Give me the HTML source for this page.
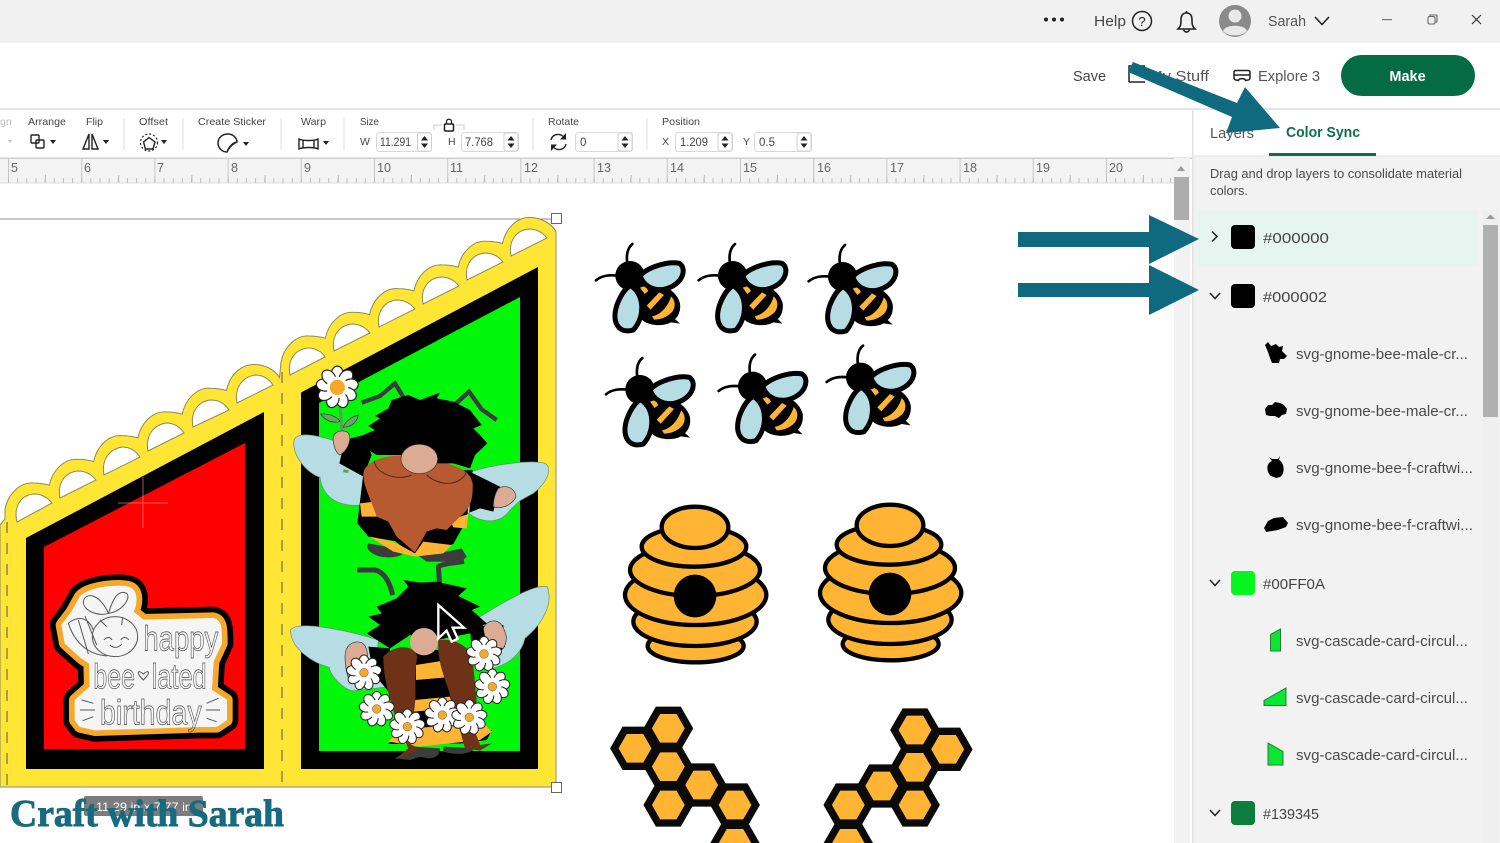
<!DOCTYPE html>
<html><head><meta charset="utf-8"><title>Color Sync</title>
<style>
html,body{margin:0;padding:0;background:#fff;width:1500px;height:843px;overflow:hidden}
svg{display:block}
text{font-family:"Liberation Sans",sans-serif}
.lb{font-size:10.5px;fill:#444}
.v{font-size:11.5px;fill:#444}
.r{font-size:12.5px;fill:#666}
.hx{font-size:15px;fill:#444}
.it{font-size:14.5px;fill:#4a4a4a}
.box{fill:#fff;stroke:#d8d8d8;stroke-width:1}
.ic{fill:none;stroke:#222;stroke-width:1.4}
</style></head><body>
<svg width="1500" height="843" viewBox="0 0 1500 843" xmlns="http://www.w3.org/2000/svg">
<defs>
<g id="bee">
<path d="M112,85C108,58 114,38 127,27" fill="none" stroke="#000" stroke-width="8" stroke-linecap="round"/>
<path d="M18,136C35,122 55,119 85,122" fill="none" stroke="#000" stroke-width="8" stroke-linecap="round"/>
<path d="M140,145C190,135 258,155 270,205C273,225 265,245 255,252L270,266L243,262C220,274 185,274 160,258C130,230 130,180 140,145Z" fill="#000"/>
<circle cx="120" cy="122" r="44" fill="#000"/>
<path d="M150,158L166,153L175,168L164,177Z" fill="#ffb433"/>
<path d="M170,212L208,172L222,180L182,224Z" fill="#ffb433"/>
<path d="M186,244C215,238 235,212 243,184C256,195 258,215 247,230C232,247 210,254 192,254Z" fill="#ffb433"/>
<path d="M150,122C175,95 235,78 268,85C292,100 280,150 222,163C185,168 160,150 150,122Z" fill="#b6dde4" stroke="#000" stroke-width="15" stroke-linejoin="round"/>
<path d="M122,152C165,180 165,245 130,285C85,298 65,262 80,212C90,185 105,160 122,152Z" fill="#b6dde4" stroke="#000" stroke-width="15" stroke-linejoin="round"/>
</g>
<g id="hive" stroke="#000" stroke-width="13" fill="#ffb433">
<ellipse cx="287" cy="468" rx="144" ry="49"/>
<ellipse cx="285" cy="395" rx="185" ry="73"/>
<ellipse cx="287" cy="315" rx="212" ry="90"/>
<ellipse cx="285" cy="240" rx="195" ry="78"/>
<ellipse cx="282" cy="170" rx="157" ry="60"/>
<ellipse cx="285" cy="112" rx="100" ry="62"/>
<circle cx="285" cy="318" r="64" fill="#000" stroke="none"/>
</g>
<polygon id="hex" points="-62,0 -31,-54 31,-54 62,0 31,54 -31,54" fill="#ffb433" stroke="#0a0a0a" stroke-width="22" stroke-linejoin="miter"/>
<g id="daisy">
<g fill="#fff" stroke="#222" stroke-width="3">
<ellipse cx="0" cy="-33" rx="15" ry="20"/>
<ellipse cx="0" cy="-33" rx="15" ry="20" transform="rotate(40)"/>
<ellipse cx="0" cy="-33" rx="15" ry="20" transform="rotate(80)"/>
<ellipse cx="0" cy="-33" rx="15" ry="20" transform="rotate(120)"/>
<ellipse cx="0" cy="-33" rx="15" ry="20" transform="rotate(160)"/>
<ellipse cx="0" cy="-33" rx="15" ry="20" transform="rotate(200)"/>
<ellipse cx="0" cy="-33" rx="15" ry="20" transform="rotate(240)"/>
<ellipse cx="0" cy="-33" rx="15" ry="20" transform="rotate(280)"/>
<ellipse cx="0" cy="-33" rx="15" ry="20" transform="rotate(320)"/>
</g>
<circle r="27" fill="#fff"/>
<circle r="13" fill="#f6a82a" stroke="#555" stroke-width="1.5"/>
</g>
<g id="spin"><rect x="-7" y="-9" width="14" height="18" rx="2" fill="#fff" stroke="#d0d0d0"/><path d="M-3.5,-1.5L0,-6L3.5,-1.5ZM-3.5,1.5L0,6L3.5,1.5Z" fill="#222"/></g>
</defs>

<!-- chrome backgrounds -->
<rect width="1500" height="843" fill="#fff"/>
<rect width="1500" height="43" fill="#f1f1f1"/>
<rect y="108" width="1500" height="2" fill="#e6e6e6"/>

<!-- top bar -->
<circle cx="1046" cy="19.5" r="2" fill="#222"/><circle cx="1054" cy="19.5" r="2" fill="#222"/><circle cx="1062" cy="19.5" r="2" fill="#222"/>
<text x="1094" y="26" font-size="15" fill="#444" textLength="32" lengthAdjust="spacingAndGlyphs">Help</text>
<circle cx="1142" cy="21" r="9.5" fill="none" stroke="#222" stroke-width="1.5"/>
<text x="1142" y="26" font-size="13" fill="#222" text-anchor="middle">?</text>
<path d="M1178,29H1195C1192,26 1192,24 1192,20C1192,15 1190,13 1186.5,13C1183,13 1181,15 1181,20C1181,24 1181,26 1178,29Z" class="ic" style="stroke-width:1.6"/>
<path d="M1183.5,29C1184,33 1189,33 1189.5,29M1186.5,13V11" class="ic" style="stroke-width:1.6"/>
<circle cx="1235" cy="21" r="16" fill="#8a8a8a"/>
<circle cx="1235" cy="16" r="6.5" fill="#e9e9e9"/>
<path d="M1223,31C1225,24 1245,24 1247,31C1242,37 1228,37 1223,31Z" fill="#e9e9e9"/>
<text x="1268" y="26" font-size="14.5" fill="#555" textLength="38" lengthAdjust="spacingAndGlyphs">Sarah</text>
<path d="M1315,17L1322,24.5L1329,17" fill="none" stroke="#222" stroke-width="1.6"/>
<rect x="1382" y="19" width="10" height="1.2" fill="#777"/>
<rect x="1428" y="16.5" width="7" height="7.5" rx="1.5" fill="none" stroke="#666" stroke-width="1.1"/>
<path d="M1430,16V15H1437V22H1435.5" fill="none" stroke="#666" stroke-width="1.1"/>
<path d="M1472,15L1481,24M1481,15L1472,24" stroke="#333" stroke-width="1.2"/>

<!-- header row -->
<text x="1073" y="81" font-size="14.5" fill="#444" textLength="33" lengthAdjust="spacingAndGlyphs">Save</text>
<path d="M1129,82V66H1145M1129,82H1145" fill="none" stroke="#222" stroke-width="1.5"/>
<text x="1149" y="81" font-size="14.5" fill="#555" textLength="60" lengthAdjust="spacingAndGlyphs">My Stuff</text>
<path d="M1234,72C1234,71 1235,70.5 1236,70.5H1248C1249,70.5 1250,71 1250,72V78C1250,79 1249,80 1248,80L1245.5,80.5C1245,78 1239,78 1238.5,80.5L1236,80C1235,80 1234,79 1234,78ZM1234,75H1250" fill="none" stroke="#222" stroke-width="1.5"/>
<text x="1258" y="81" font-size="14.5" fill="#555" textLength="62" lengthAdjust="spacingAndGlyphs">Explore 3</text>
<rect x="1341" y="55" width="134" height="41" rx="20.5" fill="#056b44"/>
<text x="1407.5" y="81" font-size="14.5" font-weight="bold" fill="#fff" text-anchor="middle">Make</text>

<!-- toolbar -->
<g>
<text x="0" y="125" class="lb" style="fill:#bbb">gn</text>
<text x="28" y="125" class="lb" textLength="38" lengthAdjust="spacingAndGlyphs">Arrange</text>
<text x="86" y="125" class="lb" textLength="17" lengthAdjust="spacingAndGlyphs">Flip</text>
<text x="139" y="125" class="lb" textLength="29" lengthAdjust="spacingAndGlyphs">Offset</text>
<text x="198" y="125" class="lb" textLength="68" lengthAdjust="spacingAndGlyphs">Create Sticker</text>
<text x="301" y="125" class="lb" textLength="25" lengthAdjust="spacingAndGlyphs">Warp</text>
<text x="360" y="125" class="lb" textLength="19" lengthAdjust="spacingAndGlyphs">Size</text>
<text x="548" y="125" class="lb" textLength="31" lengthAdjust="spacingAndGlyphs">Rotate</text>
<text x="662" y="125" class="lb" textLength="38" lengthAdjust="spacingAndGlyphs">Position</text>
<path d="M124,118V150M183,118V150M281,118V150M344,118V150M533,118V150M647,118V150" stroke="#dcdcdc" stroke-width="1"/>
<path d="M8,140L12,140L10,143Z" fill="#bbb"/>
<!-- arrange -->
<rect x="31" y="135" width="8" height="8" class="ic" rx="1"/><rect x="36" y="140" width="8" height="8" class="ic" rx="1"/>
<path d="M50,140H56L53,144Z" fill="#222"/>
<!-- flip -->
<path d="M83,149L89,134V149ZM98,149L92,134V149Z" class="ic"/>
<path d="M103,140H109L106,144Z" fill="#222"/>
<!-- offset -->
<path d="M149,137.5L155,142L153,149H145.5L143.5,142Z" class="ic"/>
<circle cx="149" cy="142.5" r="8.5" fill="none" stroke="#222" stroke-width="1.2" stroke-dasharray="2 2"/>
<path d="M161,140H167L164,144Z" fill="#222"/>
<!-- sticker -->
<path d="M227,152C222,152 218,148 218,143C218,138 222,134 228,134C233,134 237,138 237,142C232,143 229,147 227,152ZM227,152C229,148 231,145 237,142" class="ic" style="stroke-width:1.5"/>
<path d="M243,142H249L246,146Z" fill="#222"/>
<!-- warp -->
<path d="M299,139C303,141 314,141 318,139V149C314,147 303,147 299,149ZM303,140V148M314,140V148" class="ic"/>
<path d="M323,141H329L326,145Z" fill="#222"/>
<!-- size -->
<text x="360" y="145" class="lb">W</text>
<rect x="376.5" y="132.5" width="55" height="19" rx="3" class="box"/>
<text x="380" y="146" class="v" textLength="31" lengthAdjust="spacingAndGlyphs">11.291</text>
<use href="#spin" x="424.5" y="142"/>
<text x="448" y="145" class="lb">H</text>
<rect x="461.5" y="132.5" width="57" height="19" rx="3" class="box"/>
<text x="465" y="146" class="v" textLength="28" lengthAdjust="spacingAndGlyphs">7.768</text>
<use href="#spin" x="511" y="142"/>
<path d="M434,130V125H442M456,125H464V130" fill="none" stroke="#ccc"/>
<rect x="444.5" y="124" width="9" height="7" rx="1" fill="none" stroke="#222" stroke-width="1.5"/>
<path d="M446.5,124V121.5C446.5,118.5 451.5,118.5 451.5,121.5V124" fill="none" stroke="#222" stroke-width="1.3"/>
<!-- rotate -->
<path d="M551,140C552,135 557,133.5 561,135C563,136 564,137 565,138.5M566,144C565,149 560,150.5 556,149C554,148 553,147 552,145.5" fill="none" stroke="#222" stroke-width="1.4"/>
<path d="M566,133V139.5H560ZM551,151V144.5H557Z" fill="#222"/>
<rect x="575.5" y="132.5" width="57" height="19" rx="3" class="box"/>
<text x="580" y="146" class="v">0</text>
<use href="#spin" x="625" y="142"/>
<!-- position -->
<text x="662" y="145" class="lb">X</text>
<rect x="675.5" y="132.5" width="57" height="19" rx="3" class="box"/>
<text x="680" y="146" class="v" textLength="28" lengthAdjust="spacingAndGlyphs">1.209</text>
<use href="#spin" x="725" y="142"/>
<text x="743" y="145" class="lb">Y</text>
<rect x="754.5" y="132.5" width="57" height="19" rx="3" class="box"/>
<text x="759" y="146" class="v">0.5</text>
<use href="#spin" x="804" y="142"/>
</g>

<!-- ruler -->
<rect y="158" width="1174" height="25" fill="#f3f3f3"/>
<rect y="157.5" width="1192" height="1.5" fill="#cfcfcf"/>
<path d="M8.5,159V183M81.7,159V183M154.9,159V183M228.1,159V183M301.3,159V183M374.5,159V183M447.7,159V183M520.9,159V183M594.1,159V183M667.3,159V183M740.5,159V183M813.7,159V183M886.9,159V183M960.1,159V183M1033.3,159V183M1106.5,159V183" stroke="#c8c8c8" stroke-width="1"/>
<line x1="45" y1="179" x2="1174" y2="179" stroke="#bbb" stroke-width="8" stroke-dasharray="1 72.2"/>
<line x1="8" y1="180.5" x2="1174" y2="180.5" stroke="#bbb" stroke-width="5" stroke-dasharray="1 8.15"/>
<line x1="0" y1="183" x2="1174" y2="183" stroke="#ddd" stroke-width="1"/>
<g>
<text x="11" y="172" class="r">5</text><text x="84" y="172" class="r">6</text><text x="157" y="172" class="r">7</text><text x="231" y="172" class="r">8</text><text x="304" y="172" class="r">9</text><text x="377" y="172" class="r">10</text><text x="450" y="172" class="r">11</text><text x="524" y="172" class="r">12</text><text x="597" y="172" class="r">13</text><text x="670" y="172" class="r">14</text><text x="743" y="172" class="r">15</text><text x="817" y="172" class="r">16</text><text x="890" y="172" class="r">17</text><text x="963" y="172" class="r">18</text><text x="1036" y="172" class="r">19</text><text x="1109" y="172" class="r">20</text>
</g>

<!-- card -->
<rect x="0" y="218.5" width="556" height="1" fill="#8f8f8f"/>
<path d="M0,525L5,519V509c3,-15 15,-27 28,-26c7,0 12,1 16.3,2.3c3,-15 15,-27 28,-26c7,0 12,1 16.3,2.3c3,-15 15,-27 28,-26c7,0 12,1 16.3,2.3c3,-15 15,-27 28,-26c7,0 12,1 16.3,2.3c3,-15 15,-27 28,-26c7,0 12,1 16.3,2.3c3,-15 14,-26 28,-26c10,0 20,5 25,13L281,362c3,-15 15,-27 28,-26c7,0 12,1 16.3,2.3c3,-15 15,-27 28,-26c7,0 12,1 16.3,2.3c3,-15 15,-27 28,-26c7,0 12,1 16.3,2.3c3,-15 15,-27 28,-26c7,0 12,1 16.3,2.3c3,-15 15,-27 28,-26c7,0 12,1 16.3,2.3c3,-15 15,-27 28,-26c10,0 21,6 25.500,14V787H0Z" fill="#ffe534" stroke="#8c8a5a" stroke-width="1"/>
<g fill="#fff" stroke="#8c8a5a" stroke-width="1">
<path d="M17,522C13,505 22,495 34,494C42,494 48,498 52,503Z"/>
<path d="M60,498C57,482 66,472 78,471C86,471 92,475 96,480Z"/>
<path d="M104,475C101,459 110,449 122,447C130,447 136,451 140,457Z"/>
<path d="M148,451C145,435 154,425 166,423C174,423 180,427 184,433Z"/>
<path d="M193,427C190,411 199,401 211,400C219,400 225,404 229,410Z"/>
<path d="M237,403C234,387 243,377 255,375C263,375 269,379 273,385Z"/>
<path d="M290,375C287,359 296,349 308,348C316,348 322,352 325,357Z"/>
<path d="M334,351C331,335 340,325 352,324C360,324 366,328 370,333Z"/>
<path d="M379,327C376,311 385,301 397,300C405,300 411,304 415,309Z"/>
<path d="M423,304C420,288 429,278 441,277C449,277 455,281 459,286Z"/>
<path d="M467,280C464,264 473,254 485,253C493,253 499,257 503,262Z"/>
<path d="M511,256C508,240 517,230 529,229C537,229 543,233 547,238Z"/>
</g>
<path d="M26,538L264,412V769H26Z" fill="#000"/>
<path d="M44,547L245,443V749H44Z" fill="#ff0000"/>
<path d="M301,392.5L538,267V769H301Z" fill="#000"/>
<path d="M319,403L520,297V751H319Z" fill="#00f70a"/>
<path d="M7,522V787" stroke="#555" stroke-width="1" stroke-dasharray="11 10"/>
<path d="M282,372V787" stroke="#555" stroke-width="1" stroke-dasharray="11 10"/>
<path d="M0,787H556V232" fill="none" stroke="#a0a080" stroke-width="1.2"/>
<rect x="551.5" y="213.5" width="10" height="10" fill="#fff" stroke="#666"/>
<rect x="551.5" y="782.5" width="10" height="10" fill="#fff" stroke="#666"/>
<path d="M143,477V528M118,503H168" stroke="#cc8888" stroke-width="1" opacity=".7"/>

<!-- sticker -->
<g transform="translate(0,530) scale(.33333)">
<g stroke-linejoin="round">
<path d="M240,200C265,170 370,160 395,175C415,190 410,225 400,245L430,270L640,265C665,270 665,295 665,340L640,395L635,480L680,510L680,570L650,590L600,590L285,600L240,590L225,570L225,510L270,470L268,400L245,385L195,340L185,285L215,245Z" fill="#000" stroke="#000" stroke-width="70"/>
<path d="M240,200C265,170 370,160 395,175C415,190 410,225 400,245L430,270L640,265C665,270 665,295 665,340L640,395L635,480L680,510L680,570L650,590L600,590L285,600L240,590L225,570L225,510L270,470L268,400L245,385L195,340L185,285L215,245Z" fill="#f6a82a" stroke="#f6a82a" stroke-width="36"/>
<path d="M240,200C265,170 370,160 395,175C415,190 410,225 400,245L430,270L640,265C665,270 665,295 665,340L640,395L635,480L680,510L680,570L650,590L600,590L285,600L240,590L225,570L225,510L270,470L268,400L245,385L195,340L185,285L215,245Z" fill="#f5f5f5" stroke="#f5f5f5" stroke-width="2"/>
</g>
<g fill="none" stroke="#555" stroke-width="3">
<path d="M325,250C300,190 255,185 250,215C250,245 300,260 325,250C335,220 350,175 380,190C395,205 365,245 325,250Z"/>
<ellipse cx="345" cy="320" rx="68" ry="60"/>
<path d="M280,300C260,250 220,265 205,280C215,310 240,370 320,378"/>
<path d="M235,270L265,372M255,258L290,345"/>
<path d="M312,330C320,320 330,320 336,330M362,330C370,320 380,320 386,330M330,345C340,355 355,355 365,342"/>
<path d="M320,290L300,270M365,285L368,262"/>
<path d="M245,510L280,520M240,540H285M248,572L280,560M620,520L655,505M618,540H660M620,565L650,575"/>
<path d="M430,450C405,425 415,418 430,432C445,418 455,425 430,450Z"/>
</g>
<g fill="none" stroke="#444" stroke-width="2">
<text x="430" y="362" font-size="105" textLength="225" lengthAdjust="spacingAndGlyphs" style="fill:none">happy</text>
<text x="280" y="475" font-size="105" textLength="125" lengthAdjust="spacingAndGlyphs" style="fill:none">bee</text>
<text x="455" y="475" font-size="105" textLength="165" lengthAdjust="spacingAndGlyphs" style="fill:none">lated</text>
<text x="300" y="583" font-size="105" textLength="305" lengthAdjust="spacingAndGlyphs" style="fill:none">birthday</text>
</g>
</g>

<!-- gnome 1 -->
<g transform="translate(280,340) scale(.33333)">
<path d="M42,300C55,270 120,285 250,330L250,495C200,500 130,490 120,412C80,400 35,345 42,300Z" fill="#b6dde4" stroke="#6f8a70" stroke-width="2"/>
<path d="M575,395C650,370 760,360 795,370C820,385 800,430 760,460L720,482L690,510C660,555 600,550 560,515Z" fill="#b6dde4" stroke="#6f8a70" stroke-width="2"/>
<path d="M378,185L345,130L300,168L245,188" fill="none" stroke="#3c3c3c" stroke-width="13"/>
<path d="M520,198L567,155L605,208L650,240" fill="none" stroke="#3c3c3c" stroke-width="13"/>
<path d="M180,190L186,280" stroke="#5f9a5f" stroke-width="9"/>
<path d="M190,392L205,395" stroke="#5f9a5f" stroke-width="9"/>
<path d="M122,222C150,220 175,232 180,245C155,250 135,240 122,222ZM190,262C195,245 215,230 235,225C232,245 215,262 190,262Z" fill="#6fa26f" stroke="#333" stroke-width="2"/>
<g transform="translate(172,142) scale(1.2)">
<use href="#daisy"/>
<circle r="19" fill="#f6a82a"/>
</g>
<!-- feet -->
<path d="M265,610C250,630 290,655 330,652C365,650 375,640 370,630Z" fill="#3c3c3c"/>
<path d="M405,640L500,635L545,625L560,650L540,670L500,665L440,665Z" fill="#3c3c3c"/>
<!-- body -->
<path d="M195,300L250,285L275,345L250,410L178,370Z" fill="#000"/>
<path d="M250,400L232,550L265,590L345,603L405,650L520,612L560,540L578,390Z" fill="#000"/>
<path d="M575,398L660,440L640,515L600,505L568,518Z" fill="#000"/>
<path d="M240,490L285,485L290,530L245,530ZM510,540L565,522L560,565L520,562ZM252,420L270,410L265,435ZM270,590L340,605L405,640L430,605L515,615L490,640L405,650L340,635Z" fill="#ffb433"/>
<!-- beard -->
<path d="M250,400C260,350 350,340 420,350C500,370 570,380 578,430C580,490 565,510 540,530L500,570L470,565L440,575L405,637L350,590L325,545L290,530C270,470 250,440 250,400Z" fill="#b85a31"/>
<!-- hair -->
<path d="M250,285L285,270L265,258L300,235L285,228L325,205L335,180L385,165L420,180L480,158L470,175L520,185L570,210L605,255L580,265L600,285L622,310L585,345L570,385L520,370L470,370L370,345L290,345L265,330Z" fill="#000"/>
<path d="M283,362C285,400 350,425 395,405M440,405C480,440 540,440 560,395" fill="none" stroke="#4a2a1a" stroke-width="3"/>
<ellipse cx="418" cy="357" rx="55" ry="44" fill="#dcab93" stroke="#333" stroke-width="2"/>
<path d="M160,305C155,280 175,268 200,275C220,290 205,330 180,345C170,340 163,325 160,305Z" fill="#dcab93" stroke="#333" stroke-width="2"/>
<path d="M655,445C680,432 705,445 708,470C700,490 670,510 640,500C640,480 645,460 655,445Z" fill="#dcab93" stroke="#333" stroke-width="2"/>
</g>

<!-- gnome 2 -->
<g transform="translate(280,560) scale(.33333)">
<path d="M32,210C50,180 200,210 295,240L290,300L330,380L220,392C190,390 150,345 148,322C100,310 30,265 32,210Z" fill="#b6dde4" stroke="#6f8a70" stroke-width="2"/>
<path d="M600,170C680,120 770,70 802,80C820,130 790,190 735,235C725,280 690,310 640,325L580,230Z" fill="#b6dde4" stroke="#6f8a70" stroke-width="2"/>
<path d="M338,105C328,62 312,36 285,30L232,30" fill="none" stroke="#3c3c3c" stroke-width="15"/>
<path d="M480,92L475,20C490,10 520,10 552,4" fill="none" stroke="#3c3c3c" stroke-width="15"/>
<path d="M400,560L345,595L390,600L420,590C450,600 480,595 480,565ZM490,560L490,575C520,585 570,585 585,565Z" fill="#3c3c3c"/>
<!-- black hair -->
<path d="M290,140L350,115L385,80L370,60L420,68L470,65L560,85L535,108L600,140L575,150L620,190L570,220L470,240L420,235L390,225L330,265L260,220L300,195L265,170L305,160Z" fill="#000"/>
<path d="M265,260L330,265L330,400L280,340Z" fill="#000"/>
<path d="M570,200L670,195L675,260L620,320L575,270Z" fill="#000"/>
<!-- body -->
<path d="M400,270L500,270L520,400L560,520L636,510L620,540L545,550L325,552L345,520L390,450Z" fill="#000"/>
<path d="M408,315L490,302L498,352L408,360ZM405,420L510,410L520,445L400,455ZM400,468L530,460L600,480L636,515L600,540L420,560L325,545Z" fill="#ffb433"/>
<path d="M400,465L510,455L520,495L400,505Z" fill="#000"/>
<!-- braids -->
<path d="M310,290C340,255 400,250 412,290C400,350 412,400 402,455L380,545L420,570L345,598L385,565L355,500L340,450C325,400 310,350 310,290Z" fill="#6e3219"/>
<path d="M475,240C520,235 570,255 578,300L590,420L580,500L600,555L636,550L600,572L555,565L520,440C505,370 470,320 475,240Z" fill="#6e3219"/>
<ellipse cx="432" cy="245" rx="42" ry="41" fill="#dcab93"/>
<path d="M195,290C195,255 220,240 245,248C265,260 265,290 260,320L210,370C200,340 195,320 195,290Z" fill="#dcab93" stroke="#333" stroke-width="2"/>
<path d="M610,205C620,180 650,175 665,195C680,220 685,240 670,265L620,260Z" fill="#dcab93" stroke="#333" stroke-width="2"/>
<use href="#daisy" x="252" y="338"/>
<use href="#daisy" x="290" y="447"/>
<use href="#daisy" x="382" y="500"/>
<use href="#daisy" x="487" y="465"/>
<use href="#daisy" x="568" y="472"/>
<use href="#daisy" x="612" y="282"/>
<use href="#daisy" x="637" y="380"/>
<!-- cursor -->
<path d="M475,135V235L500,212L515,245L533,236L518,203L552,203Z" fill="#000" stroke="#fff" stroke-width="7" stroke-linejoin="miter"/>
</g>

<!-- bees -->
<g transform="translate(590,235) scale(.33333)">
<use href="#bee"/>
<use href="#bee" x="308"/>
<use href="#bee" x="638" y="3"/>
<use href="#bee" x="30" y="342"/>
<use href="#bee" x="368" y="332"/>
<use href="#bee" x="692" y="305"/>
</g>

<!-- hives & comb -->
<g transform="translate(600,490) scale(.33333)">
<use href="#hive"/>
<use href="#hive" x="585" y="-6"/>
<use href="#hex" x="205" y="715"/>
<use href="#hex" x="105" y="775"/>
<use href="#hex" x="205" y="830"/>
<use href="#hex" x="305" y="885"/>
<use href="#hex" x="405" y="945"/>
<use href="#hex" x="205" y="945"/>
<use href="#hex" x="405" y="1060"/>
<use href="#hex" x="945" y="720"/>
<use href="#hex" x="1043" y="778"/>
<use href="#hex" x="945" y="832"/>
<use href="#hex" x="845" y="888"/>
<use href="#hex" x="745" y="945"/>
<use href="#hex" x="945" y="945"/>
<use href="#hex" x="745" y="1060"/>
</g>

<!-- logo -->
<rect x="84" y="796" width="119" height="20" rx="2" fill="#7c7c7c"/>
<text x="96" y="811" font-size="12" fill="#fff" textLength="96" lengthAdjust="spacingAndGlyphs">11.29 in x 7.77 in</text>
<text x="10" y="826" font-size="38" font-weight="bold" fill="#176a80" stroke="#176a80" stroke-width=".9" textLength="274" lengthAdjust="spacingAndGlyphs" style="font-family:'Liberation Serif',serif">Craft with Sarah</text>

<!-- canvas scrollbar -->
<rect x="1174" y="158" width="16" height="685" fill="#f2f2f2"/>
<path d="M1177,171L1181,166L1185,171Z" fill="#999"/>
<rect x="1174" y="177" width="15" height="43" fill="#adadad"/>

<!-- right panel -->
<rect x="1192" y="110" width="308" height="733" fill="#f2f2f2"/>
<rect x="1192" y="110" width="308" height="46" fill="#fff"/>
<rect x="1192" y="110" width="1.5" height="733" fill="#e2e2e2"/>
<rect x="1193" y="155.5" width="307" height="1" fill="#e6e6e6"/>
<text x="1210" y="138" font-size="14.5" fill="#555" textLength="44" lengthAdjust="spacingAndGlyphs">Layers</text>
<text x="1286" y="137" font-size="14.5" font-weight="bold" fill="#0c6f49" textLength="74" lengthAdjust="spacingAndGlyphs">Color Sync</text>
<rect x="1269" y="153" width="107" height="3" fill="#0c6f49"/>
<text x="1210" y="178" font-size="12.5" fill="#4a4a4a" textLength="252" lengthAdjust="spacingAndGlyphs">Drag and drop layers to consolidate material</text>
<text x="1210" y="195" font-size="12.5" fill="#4a4a4a" textLength="38" lengthAdjust="spacingAndGlyphs">colors.</text>

<rect x="1197" y="210" width="281" height="56" fill="#e7f5f0"/>
<rect x="1483" y="210" width="15" height="633" fill="#efefef"/>
<path d="M1486,219L1490.5,214.5L1495,219Z" fill="#999"/>
<rect x="1483" y="225" width="15" height="192" fill="#b0b0b0"/>

<path d="M1212,231.5L1217,236.5L1212,241.5" fill="none" stroke="#222" stroke-width="1.5"/>
<rect x="1231" y="225" width="24" height="24" rx="4" fill="#000"/>
<text x="1263" y="243" class="hx" textLength="66" lengthAdjust="spacingAndGlyphs">#000000</text>

<path d="M1210,293L1215,298.5L1220,293" fill="none" stroke="#222" stroke-width="1.5"/>
<rect x="1231" y="284" width="24" height="24" rx="4" fill="#000"/>
<text x="1263" y="302" class="hx" textLength="64" lengthAdjust="spacingAndGlyphs">#000002</text>

<path d="M1265,345L1268,342L1271,346L1276,344L1279,347L1283,346L1282,351L1287,356L1284,359L1280,359L1279,363L1272,363L1270,358L1268,352Z" fill="#000"/>
<text x="1296" y="359" class="it" textLength="172" lengthAdjust="spacingAndGlyphs">svg-gnome-bee-male-cr...</text>
<path d="M1265,409L1268,405L1272,405L1275,402L1280,403L1284,405L1287,409L1286,414L1282,415L1279,418L1275,416L1270,416L1266,415Z" fill="#000"/>
<text x="1296" y="416" class="it" textLength="172" lengthAdjust="spacingAndGlyphs">svg-gnome-bee-male-cr...</text>
<path d="M1269,457L1272,459L1274,459L1278,459L1280,456L1279,460C1285,463 1285,474 1280,477L1276,478L1271,476C1266,472 1266,463 1272,461Z" fill="#000"/>
<text x="1296" y="473" class="it" textLength="177" lengthAdjust="spacingAndGlyphs">svg-gnome-bee-f-craftwi...</text>
<path d="M1264,528L1268,521L1274,518L1283,517L1288,523L1286,527L1278,530L1266,532Z" fill="#000"/>
<text x="1296" y="530" class="it" textLength="177" lengthAdjust="spacingAndGlyphs">svg-gnome-bee-f-craftwi...</text>

<path d="M1210,580L1215,585.5L1220,580" fill="none" stroke="#222" stroke-width="1.5"/>
<rect x="1231" y="571" width="24" height="24" rx="4" fill="#05f51f"/>
<text x="1263" y="589" class="hx" textLength="62" lengthAdjust="spacingAndGlyphs">#00FF0A</text>

<path d="M1270.5,634.5L1280.5,629V651H1270.5Z" fill="#0be633" stroke="#2a7a3a"/>
<text x="1296" y="646" class="it" textLength="172" lengthAdjust="spacingAndGlyphs">svg-cascade-card-circul...</text>
<path d="M1264,700.5L1286,688V705.5H1264Z" fill="#0be633" stroke="#2a7a3a"/>
<text x="1296" y="703" class="it" textLength="172" lengthAdjust="spacingAndGlyphs">svg-cascade-card-circul...</text>
<path d="M1268,743L1283,751.5V765H1268Z" fill="#0be633" stroke="#2a7a3a"/>
<text x="1296" y="760" class="it" textLength="172" lengthAdjust="spacingAndGlyphs">svg-cascade-card-circul...</text>

<path d="M1210,810L1215,815.5L1220,810" fill="none" stroke="#222" stroke-width="1.5"/>
<rect x="1231" y="801" width="24" height="24" rx="4" fill="#0c7d3a"/>
<text x="1263" y="819" class="hx" textLength="56" lengthAdjust="spacingAndGlyphs">#139345</text>

<!-- teal arrows -->
<g fill="#0f6a80">
<polygon points="1133,62 1237,103 1245,87 1280,128 1226,133 1232,117 1128,72"/>
<polygon points="1018,232 1149,232 1149,215 1199,239 1149,264 1149,247 1018,247"/>
<polygon points="1018,283 1149,283 1149,265 1199,290 1149,315 1149,297 1018,297"/>
</g>
</svg>
</body></html>
